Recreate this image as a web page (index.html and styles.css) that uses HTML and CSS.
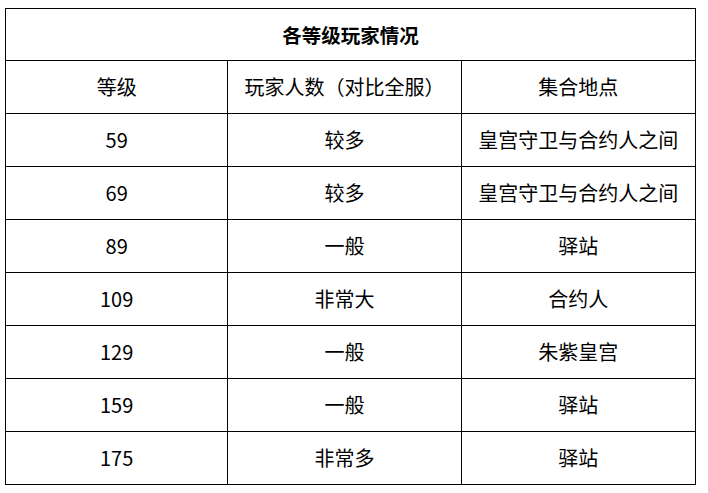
FILE: index.html
```html
<!DOCTYPE html>
<html lang="zh-CN">
<head>
<meta charset="utf-8">
<link rel="stylesheet" href="styles.css">
</head>
<body>
<table class="levels">
  <colgroup>
    <col class="c1"><col class="c2"><col class="c3">
  </colgroup>
  <tr class="head"><th class="title" colspan="3">各等级玩家情况</th></tr>
  <tr><td>等级</td><td>玩家人数（对比全服）</td><td>集合地点</td></tr>
  <tr><td>59</td><td>较多</td><td>皇宫守卫与合约人之间</td></tr>
  <tr><td>69</td><td>较多</td><td>皇宫守卫与合约人之间</td></tr>
  <tr><td>89</td><td>一般</td><td>驿站</td></tr>
  <tr><td>109</td><td>非常大</td><td>合约人</td></tr>
  <tr><td>129</td><td>一般</td><td>朱紫皇宫</td></tr>
  <tr><td>159</td><td>一般</td><td>驿站</td></tr>
  <tr><td>175</td><td>非常多</td><td>驿站</td></tr>
</table>
</body>
</html>
```
FILE: styles.css
```css
html, body { background: #fff; }
body {
  margin: 0;
  padding: 8px 0 0 5px;
  font-family: "Noto Sans CJK SC", "Noto Sans", sans-serif;
  color: #000;
}
.levels {
  border-collapse: collapse;
  width: 691px;
  table-layout: fixed;
}
.c1 { width: 222px; }
.c2 { width: 233px; }
.c3 { width: 234px; }
.levels tr { height: 53px; }
.levels tr.head { height: 52px; }
.levels th, .levels td {
  border: 1px solid #000;
  padding: 0;
  text-align: center;
  vertical-align: middle;
  font-size: 20px;
  font-weight: normal;
  line-height: 20px;
}
.levels th.title {
  font-weight: bold;
  font-size: 19.5px;
}
```
